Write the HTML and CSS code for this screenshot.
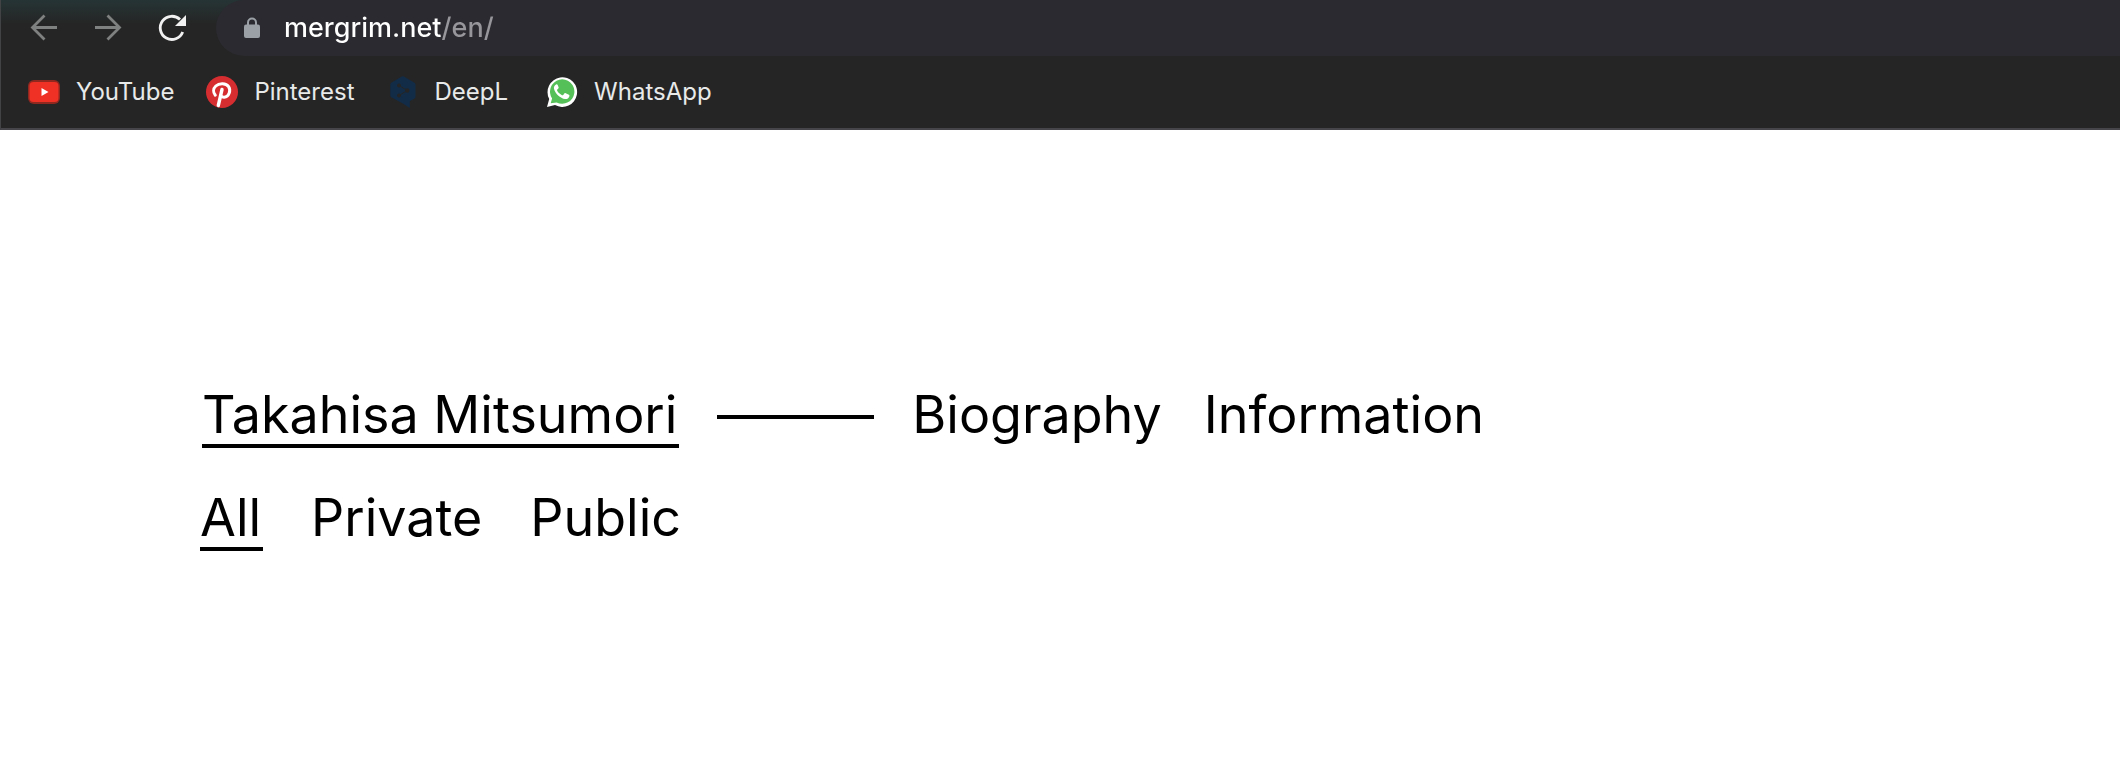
FILE: index.html
```html
<!DOCTYPE html>
<html lang="en">
<head>
<meta charset="utf-8">
<meta name="viewport" content="width=device-width, initial-scale=1">
<title>Takahisa Mitsumori</title>
<link rel="stylesheet" href="styles.css">
</head>
<body>
<header class="browser">
  <div class="toolbar">
    <div class="controls">
      <button class="control control-muted" type="button" aria-label="Back">
        <svg viewBox="0 0 32 32" fill="none" stroke="currentColor" stroke-width="2.8"><path d="M29 15.5H5M16.5 3.5L4.500 15.500l12 12"/></svg>
      </button>
      <button class="control control-muted" type="button" aria-label="Forward">
        <svg viewBox="0 0 32 32" fill="none" stroke="currentColor" stroke-width="2.8"><path d="M3 15.5h24M15.500 3.500l12 12-12 12"/></svg>
      </button>
      <button class="control" type="button" aria-label="Reload">
        <svg viewBox="0 0 32 32"><path d="M26.700 20A11.600 11.600 0 1 1 24 7.600" fill="none" stroke="currentColor" stroke-width="2.800"/><path d="M30 3v11H19z" fill="currentColor"/></svg>
      </button>
    </div>
    <div class="address">
      <svg class="lock" viewBox="0 0 16 22"><path d="M4 9V5.500a4 4 0 0 1 8 0V9" fill="none" stroke="currentColor" stroke-width="2"/><rect y="7.500" width="16" height="13.500" rx="2" fill="currentColor"/></svg>
      <input class="url" type="text" aria-label="Address" value="mergrim.net/en/" spellcheck="false">
    </div>
  </div>
  <nav class="bookmarks" aria-label="Bookmarks">
    <a class="bookmark" href="#youtube">
      <svg viewBox="0 0 32 32"><rect y="4" width="32" height="24" rx="6" fill="#912820"/><rect x="1.500" y="6" width="29" height="20" rx="4" fill="#ee3124"/><path d="M13.500 12l7 4-7 4z" fill="#fff"/></svg>
      <span>YouTube</span>
    </a>
    <a class="bookmark" href="#pinterest">
      <svg viewBox="0 0 32 32"><circle cx="16" cy="16" r="16" fill="#d62d30"/><g fill="none" stroke="#fff" stroke-linecap="round"><path d="M9.300 19.200C7 16.500 7 12.600 9.800 10c3.600-3.300 10.300-3 12.800.6 2.500 3.800.4 10.400-4.300 10.700-1.600.1-2.700-.5-3.300-1.500" stroke-width="3"/><path d="M16 13.500L12.300 29.500" stroke-width="3.400"/></g></svg>
      <span>Pinterest</span>
    </a>
    <a class="bookmark bookmark-wide" href="#deepl">
      <svg viewBox="0 0 32 32"><path d="M14.800.5a2 2 0 0 1 2 0l10.700 6.200q1 .6 1 1.800v12.300q0 1-1 1.700l-4.700 2.700V32l-6.500-4.200-12-6.500q-1-.6-1-1.700V8.500q0-1.200 1-1.800z" fill="#122c48"/><g fill="#252525"><circle cx="12" cy="9.500" r="2"/><circle cx="20.300" cy="14.500" r="2.200"/><circle cx="12" cy="19.500" r="2"/></g><path d="M12 9.500l8.300 5-8.300 5" fill="none" stroke="#252525"/></svg>
      <span>DeepL</span>
    </a>
    <a class="bookmark" href="#whatsapp">
      <svg viewBox="0 0 32 32"><path d="M1 31l2.200-8A14.800 14.800 0 1 1 9 29z" fill="#fff"/><path d="M4.700 27.300l1.400-4.900a12.200 12.200 0 1 1 4.500 4z" fill="#55c057"/><path d="M11.800 9.300c-.5-1-.9-1-1.700-.9C8.500 9 7.600 10.800 8 12.700c1 4.700 6.400 9.700 11 10.300 2 .2 3.800-.9 4.300-2.600.3-1 .2-1.400-.4-1.700l-3.200-1.500c-.6-.3-.9-.2-1.300.3l-1.200 1.500c-.4.400-.7.500-1.200.200-2-.9-3.700-2.400-4.800-4.400-.3-.5-.2-.8.100-1.200l1.200-1.400c.2-.3.200-.6.100-.9z" fill="#fff"/></svg>
      <span>WhatsApp</span>
    </a>
  </nav>
</header>
<main class="page">
  <nav class="row row-main" aria-label="Main">
    <a class="current" href="#home">Takahisa Mitsumori</a>
    <span class="dash" aria-hidden="true"></span>
    <div class="links">
      <a href="#biography">Biography</a>
      <a href="#information">Information</a>
    </div>
  </nav>
  <nav class="row row-filter" aria-label="Works">
    <a class="current" href="#all">All</a>
    <a href="#private">Private</a>
    <a href="#public">Public</a>
  </nav>
</main>
</body>
</html>
```
FILE: styles.css
```css
* {
  box-sizing: border-box;
}

body {
  margin: 0;
  background: #fff;
  color: #000;
  font-family: Inter, "Liberation Sans", sans-serif;
}

a {
  color: inherit;
  text-decoration: none;
}

.browser {
  background: linear-gradient(#263435, #252525 24px);
  border-bottom: 2px solid #46464a;
  border-left: 1px solid #414344;
}

.toolbar {
  display: flex;
  height: 56px;
}

.controls {
  display: flex;
  align-items: center;
  gap: 32px;
  padding: 0 28px 0 27px;
}

.control {
  width: 32px;
  height: 32px;
  padding: 0;
  border: 0;
  background: none;
  color: #f1f1f1;
}

.control-muted {
  color: #7f8080;
}

.control svg,
.bookmark svg {
  display: block;
  width: 32px;
  height: 32px;
}

.address {
  display: flex;
  flex: 1;
  align-items: center;
  gap: 24px;
  padding-left: 28px;
  border-radius: 28px 0 0 28px;
  background: #2b2a30;
}

.lock {
  width: 16px;
  height: 22px;
  color: #9aa0a6;
}

.url {
  flex: 1;
  padding: 0;
  border: 0;
  outline: 0;
  background: linear-gradient(90deg, #fff 158px, #97969b 158px) text;
  color: transparent;
  font: 500 27px/32px Inter, "Liberation Sans", sans-serif;
}

.bookmarks {
  display: flex;
  align-items: center;
  gap: 32px;
  height: 72px;
  padding: 0 27px;
  color: #e8eaea;
  font-size: 24px;
  line-height: 32px;
}

.bookmark {
  display: flex;
  align-items: center;
  gap: 16px;
}

.bookmark-wide {
  padding-right: 6px;
}

.page {
  display: flex;
  flex-direction: column;
  gap: 41px;
  padding: 256px 200px 0;
  font-size: 52px;
  line-height: 58px;
}

.row {
  display: flex;
  flex-wrap: wrap;
  align-items: flex-start;
}

.row-main {
  gap: 38px;
  padding-left: 2px;
}

.row-filter {
  gap: 48px;
}

.links {
  display: flex;
  gap: 42px;
}

.current {
  padding-right: 2px;
  border-bottom: 4px solid #000;
}

.dash {
  width: 157px;
  height: 4px;
  margin-top: 29px;
  background: #000;
}
```
